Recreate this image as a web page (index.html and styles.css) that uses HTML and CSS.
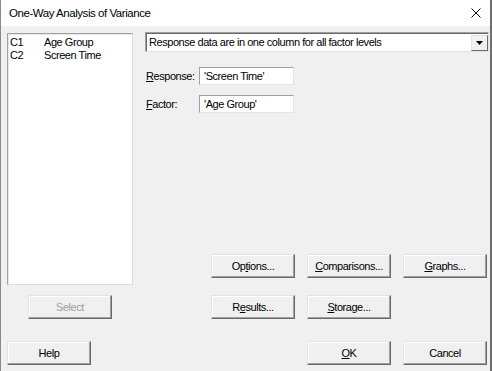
FILE: index.html
```html
<!DOCTYPE html>
<html>
<head>
<meta charset="utf-8">
<link rel="stylesheet" href="styles.css">
</head>
<body>
<div class="window">
  <div class="titlebar">
    <span class="title">One-Way Analysis of Variance</span>
    <svg class="close" width="10" height="10" viewBox="0 0 10 10"><path d="M0.5 0.5 L9.5 9.5 M9.5 0.5 L0.5 9.5" stroke="#000" stroke-width="1" fill="none"/></svg>
  </div>
  <div class="content">
    <div class="main">
      <div class="leftcol">
        <div class="listbox">
          <div class="item"><span class="col">C1</span><span>Age Group</span></div>
          <div class="item"><span class="col">C2</span><span>Screen Time</span></div>
        </div>
        <button class="btn select disabled">Select</button>
      </div>
      <div class="rightcol">
        <div class="combo">
          <span class="combo-text">Response data are in one column for all factor levels</span>
          <span class="combo-btn"><svg width="7" height="4" viewBox="0 0 7 4"><path d="M0 0 H7 L3.5 4 Z" fill="#000"/></svg></span>
        </div>
        <div class="field first">
          <label class="lbl"><u>R</u>esponse:</label>
          <div class="input">'Screen Time'</div>
        </div>
        <div class="field">
          <label class="lbl"><u>F</u>actor:</label>
          <div class="input">'Age Group'</div>
        </div>
        <div class="btngrid">
          <button class="btn">Op<u>t</u>ions...</button>
          <button class="btn"><u>C</u>omparisons...</button>
          <button class="btn"><u>G</u>raphs...</button>
          <button class="btn">R<u>e</u>sults...</button>
          <button class="btn"><u>S</u>torage...</button>
        </div>
      </div>
    </div>
    <div class="bottom">
      <button class="btn">Help</button>
      <div class="okcancel">
        <button class="btn"><u>O</u>K</button>
        <button class="btn">Cancel</button>
      </div>
    </div>
  </div>
</div>
</body>
</html>
```
FILE: styles.css
```css
html, body {
  margin: 0;
  padding: 0;
  background: #f0f0f0;
}
.window {
  width: 492px;
  height: 371px;
  box-sizing: border-box;
  border-left: 1px solid #8a8a8a;
  border-right: 2px solid #6e6e6e;
  display: flex;
  flex-direction: column;
  font-family: "Liberation Sans", Arial, sans-serif;
  font-size: 11px;
  letter-spacing: -0.45px;
  color: #000;
}
.titlebar {
  height: 26px;
  flex: none;
  background: #fff;
  display: flex;
  align-items: center;
  padding-left: 8px;
  padding-right: 9px;
}
.title {
  font-size: 11.5px;
  letter-spacing: -0.45px;
  flex: 1;
}
.close {
  display: block;
}
.content {
  flex: 1;
  background: #f0f0f0;
  display: flex;
  flex-direction: column;
  padding: 6px 1px 6px 6px;
}
.main {
  display: flex;
  gap: 12px;
  height: 287px;
}
.leftcol {
  width: 126px;
  display: flex;
  flex-direction: column;
}
.listbox {
  margin-top: 1px;
  height: 252px;
  box-sizing: border-box;
  background: #fff;
  border: 1px solid;
  border-color: #a0a0a0 #dcdcdc #dcdcdc #a0a0a0;
  box-shadow: inset 1px 1px 0 #e8e8e8;
  padding: 2px 1px;
}
.item {
  display: flex;
  height: 13px;
  line-height: 13px;
}
.col {
  width: 34px;
  padding-left: 1px;
}
.btn {
  font-family: "Liberation Sans", Arial, sans-serif;
  font-size: 11px;
  letter-spacing: -0.45px;
  color: #000;
  width: 84px;
  height: 24px;
  box-sizing: border-box;
  padding: 0;
  margin: 0;
  background: #f0f0f0;
  border: 1px solid;
  border-color: #e3e3e3 #696969 #696969 #e3e3e3;
  box-shadow: inset -1px -1px 0 #a0a0a0, inset 1px 1px 0 #fff;
}
.select {
  margin-top: 10px;
  margin-left: 21px;
}
.disabled {
  color: #a0a0a0;
}
.rightcol {
  flex: 1;
  display: flex;
  flex-direction: column;
}
.combo {
  height: 20px;
  box-sizing: border-box;
  background: #fff;
  border: 1px solid;
  border-color: #a0a0a0 #e3e3e3 #e3e3e3 #a0a0a0;
  box-shadow: inset 1px 1px 0 #696969;
  display: flex;
  align-items: center;
}
.combo-text {
  flex: 1;
  padding-left: 3px;
}
.combo-btn {
  width: 17px;
  height: 16px;
  margin-top: 1px;
  box-sizing: border-box;
  background: #f0f0f0;
  border: 1px solid;
  border-color: #e3e3e3 #696969 #696969 #e3e3e3;
  display: flex;
  align-items: center;
  justify-content: center;
}
.combo-btn svg {
  display: block;
}
.field {
  display: flex;
  align-items: center;
  margin-top: 10px;
}
.field.first {
  margin-top: 15px;
}
.lbl {
  width: 54px;
  padding-left: 1px;
  box-sizing: border-box;
}
.input {
  width: 95px;
  height: 18px;
  box-sizing: border-box;
  background: #fff;
  border: 1px solid;
  border-color: #a0a0a0 #e3e3e3 #e3e3e3 #a0a0a0;
  padding-left: 4px;
  line-height: 16px;
}
.btngrid {
  margin-top: auto;
  align-self: flex-end;
  margin-right: 2px;
  display: grid;
  grid-template-columns: 84px 84px 84px;
  grid-auto-rows: 24px;
  column-gap: 12px;
  row-gap: 17px;
}
.bottom {
  margin-top: 22px;
  display: flex;
  justify-content: space-between;
  padding-right: 2px;
}
.okcancel {
  display: flex;
  gap: 12px;
}
u {
  text-decoration: underline;
}
```
